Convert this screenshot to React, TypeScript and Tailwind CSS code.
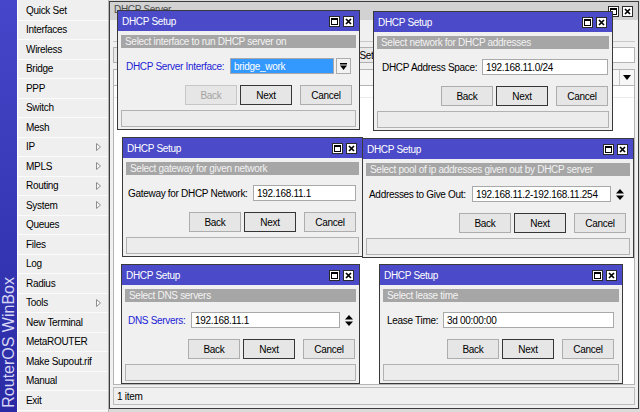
import React from 'react';

type MenuItem = { label: string; sub?: boolean };

const menuItems: MenuItem[] = [
  { label: 'Quick Set' },
  { label: 'Interfaces' },
  { label: 'Wireless' },
  { label: 'Bridge' },
  { label: 'PPP' },
  { label: 'Switch' },
  { label: 'Mesh' },
  { label: 'IP', sub: true },
  { label: 'MPLS', sub: true },
  { label: 'Routing', sub: true },
  { label: 'System', sub: true },
  { label: 'Queues' },
  { label: 'Files' },
  { label: 'Log' },
  { label: 'Radius' },
  { label: 'Tools', sub: true },
  { label: 'New Terminal' },
  { label: 'MetaROUTER' },
  { label: 'Make Supout.rif' },
  { label: 'Manual' },
  { label: 'Exit' },
];

type Dialog = {
  pos: string;
  subtitle: string;
  label: string;
  labelCls: string;
  rowCls: string;
  btnCls: string;
  value: string;
  selected?: boolean;
  tail?: 'drop' | 'spin';
  backOff?: boolean;
};

// order matters: later ones sit on top
const dialogs: Dialog[] = [
  {
    pos: 'left-[117px] top-[10px] w-[243px]',
    subtitle: 'Select interface to run DHCP server on',
    label: 'DHCP Server Interface:',
    labelCls: 'w-[104px] text-[#1c1cd6]',
    rowCls: 'pl-[5px] pr-[5px]',
    btnCls: 'pr-[4px]',
    value: 'bridge_work',
    selected: true,
    tail: 'drop',
    backOff: true,
  },
  {
    pos: 'left-[373px] top-[11px] w-[240px]',
    subtitle: 'Select network for DHCP addresses',
    label: 'DHCP Address Space:',
    labelCls: 'w-[100px] text-black',
    rowCls: 'pl-[5px] pr-[1px]',
    btnCls: 'pr-[1px]',
    value: '192.168.11.0/24',
  },
  {
    pos: 'left-[122px] top-[137px] w-[241px]',
    subtitle: 'Select gateway for given network',
    label: 'Gateway for DHCP Network:',
    labelCls: 'w-[125px] text-black',
    rowCls: 'pl-[2px] pr-[3px]',
    btnCls: 'pr-[3px]',
    value: '192.168.11.1',
  },
  {
    pos: 'left-[362px] top-[138px] w-[272px]',
    subtitle: 'Select pool of ip addresses given out by DHCP server',
    label: 'Addresses to Give Out:',
    labelCls: 'w-[103px] text-black',
    rowCls: 'pl-[3px] pr-[6px]',
    btnCls: 'pr-[4px]',
    value: '192.168.11.2-192.168.11.254',
    tail: 'spin',
  },
  {
    pos: 'left-[121px] top-[264px] w-[239px]',
    subtitle: 'Select DNS servers',
    label: 'DNS Servers:',
    labelCls: 'w-[63px] text-[#1c1cd6]',
    rowCls: 'pl-[3px] pr-[3px]',
    btnCls: 'pr-[1px]',
    value: '192.168.11.1',
    tail: 'spin',
  },
  {
    pos: 'left-[379px] top-[264px] w-[244px]',
    subtitle: 'Select lease time',
    label: 'Lease Time:',
    labelCls: 'w-[56px] text-black',
    rowCls: 'pl-[4px] pr-[5px]',
    btnCls: 'pr-[5px]',
    value: '3d 00:00:00',
  },
];

function WinButtons() {
  return (
    <div className="flex items-center gap-[3px]">
      <div className="w-[11px] h-[11px] bg-white border border-[#2a2a2a] flex items-center justify-center">
        <svg width="7" height="7" viewBox="0 0 7 7">
          <rect x="0.5" y="0.5" width="6" height="6" fill="none" stroke="#000" />
          <rect x="0" y="0" width="7" height="2" fill="#000" />
        </svg>
      </div>
      <div className="w-[11px] h-[11px] bg-white border border-[#2a2a2a] flex items-center justify-center">
        <svg width="7" height="7" viewBox="0 0 7 7">
          <path d="M1 1L6 6M6 1L1 6" stroke="#000" strokeWidth="1.7" />
        </svg>
      </div>
    </div>
  );
}

function SubArrow() {
  return (
    <svg width="5" height="8" viewBox="0 0 5 8">
      <path d="M0.5 0.5L4.5 4L0.5 7.5Z" fill="#f6f6f6" stroke="#8e8e8e" strokeWidth="1" />
    </svg>
  );
}

function SetupDialog({ d }: { d: Dialog }) {
  return (
    <div className={`absolute ${d.pos} h-[120px] border border-[#3a3a3a] bg-[#f0f0f0] flex flex-col`}>
      {/* Title */}
      <div className="h-[20px] bg-[#4b4bc9] flex items-center justify-between pl-[4px] pr-[5px] text-white">
        <span>DHCP Setup</span>
        <WinButtons />
      </div>

      <div className="flex-1 flex flex-col px-[3px]">
        <div className="mt-[4px] h-[13px] bg-[#a6a6a6] text-[#f3f3f3] pl-[4px] leading-[13px] whitespace-nowrap overflow-hidden">
          {d.subtitle}
        </div>

        {/* Field row */}
        <div className={`mt-[10px] h-[16px] flex items-center ${d.rowCls}`}>
          <span className={`shrink-0 whitespace-nowrap ${d.labelCls}`}>{d.label}</span>
          <div
            className={`flex-1 h-[16px] border border-[#a9a9a9] flex items-center pl-[3px] whitespace-nowrap overflow-hidden ${
              d.selected ? 'bg-[#3399ff] text-white' : 'bg-white text-black'
            }`}
          >
            {d.value}
          </div>
          {d.tail === 'drop' && (
            <div className="ml-[2px] w-[15px] h-[16px] border border-[#acacac] bg-[#f2f2f2] flex items-center justify-center">
              <svg width="7" height="7" viewBox="0 0 7 7">
                <rect x="0" y="0" width="7" height="1.5" fill="#000" />
                <path d="M0 2.5H7L3.5 7Z" fill="#000" />
              </svg>
            </div>
          )}
          {d.tail === 'spin' && (
            <div className="ml-[5px] w-[8px] flex items-center justify-center">
              <svg width="8" height="11" viewBox="0 0 8 11">
                <path d="M0 4.5H8L4 0Z" fill="#000" />
                <path d="M0 6.5H8L4 11Z" fill="#000" />
              </svg>
            </div>
          )}
        </div>

        {/* Buttons */}
        <div className={`mt-[11px] h-[20px] flex justify-end ${d.btnCls}`}>
          <div
            className={`w-[52px] h-[20px] border bg-[#e6e6e6] flex items-center justify-center ${
              d.backOff ? 'border-[#c6c6c6] text-[#a3a3a3]' : 'border-[#adadad] text-black'
            }`}
          >
            Back
          </div>
          <div className="ml-[3px] w-[52px] h-[20px] border border-[#363636] bg-[#e6e6e6] flex items-center justify-center">
            Next
          </div>
          <div className="ml-[8px] w-[52px] h-[20px] border border-[#adadad] bg-[#e6e6e6] flex items-center justify-center">
            Cancel
          </div>
        </div>

        {/* Status */}
        <div className="mt-[5px] h-[17px] border border-[#b2b2b2] bg-[#ececec]" />
      </div>
    </div>
  );
}

// header cells of the list behind the wizard (labels are hidden under the dialogs)
const columnWidths = ['w-[80px]', 'w-[90px]', 'w-[92px]', 'w-[70px]', 'w-[90px]', 'w-[70px]'];

export default function App() {
  return (
    <div className="relative w-[640px] h-[412px] overflow-hidden bg-[#dadada] flex font-['Liberation_Sans',Arial,sans-serif] text-[10px] tracking-[-0.3px] text-black">
      {/* Brand strip */}
      <div className="w-[17px] h-full bg-linear-to-b from-[#4646ca] to-[#2a2aa4] flex flex-col justify-end items-center pb-[4px]">
        <span className="[writing-mode:vertical-rl] rotate-180 text-[16px] tracking-normal leading-[17px] text-[#d6d6f4] whitespace-nowrap">
          RouterOS WinBox
        </span>
      </div>

      {/* Menu */}
      <div className="w-[92px] h-full bg-[#efefef] border-l border-white border-r border-r-[#b4b4b4] pt-[1px] flex flex-col">
        {menuItems.map((m) => (
          <div
            key={m.label}
            className="h-[19.5px] shrink-0 border-b border-[#fbfbfb] flex items-center justify-between pl-[8px] pr-[7px] whitespace-nowrap"
          >
            <span>{m.label}</span>
            {m.sub && <SubArrow />}
          </div>
        ))}
      </div>

      {/* Main DHCP Server window */}
      <div className="mt-[1px] w-[530px] h-[408px] border border-[#3c3c3c] bg-[#f0f0f0] flex flex-col">
        <div className="h-[18px] bg-[#d2d2d2] flex items-center justify-between pl-[4px] pr-[5px] text-[#4a4a4a]">
          <span className="-mt-[4px]">DHCP Server</span>
          <WinButtons />
        </div>

        <div className="flex-1 flex flex-col px-[3px] pb-[3px]">
          {/* tab strip */}
          <div className="mt-[2px] h-[20px] border-b border-[#c8c8c8]" />

          {/* toolbar */}
          <div className="mt-[5px] h-[16px] flex items-center gap-[3px]">
            {[0, 1, 2, 3, 4, 5].map((i) => (
              <div key={i} className="w-[22px] h-[16px] border border-[#b0b0b0] bg-[#e9e9e9]" />
            ))}
            <div className="w-[60px] h-[16px] border border-[#b0b0b0] bg-[#e9e9e9]" />
            <div className="w-[62px] h-[16px] border border-[#b0b0b0] bg-[#e9e9e9] flex items-center justify-center">
              DHCP Setup
            </div>
            <div className="flex-1" />
            <div className="w-[96px] h-[16px] border border-[#b4b4b4] bg-white" />
          </div>

          {/* column header */}
          <div className="mt-[6px] h-[17px] flex border border-[#b4b4b4] bg-[#f7f7f7]">
            {columnWidths.map((w, i) => (
              <div key={i} className={`${w} shrink-0 border-r border-[#d0d0d0]`} />
            ))}
            <div className="flex-1" />
            <div className="w-[15px] border-l border-[#c4c4c4] flex items-center justify-center">
              <svg width="8" height="5" viewBox="0 0 8 5">
                <path d="M0 0H8L4 5Z" fill="#000" />
              </svg>
            </div>
          </div>

          {/* list */}
          <div className="flex-1 bg-white border-x border-b border-[#b4b4b4]">
            <div className="h-[12px] border-b border-[#ececec]" />
          </div>

          {/* status */}
          <div className="mt-[2px] h-[18px] border border-[#bcbcbc] bg-[#f0f0f0] flex items-center pl-[3px]">
            1 item
          </div>
        </div>
      </div>

      {dialogs.map((d) => (
        <SetupDialog key={d.subtitle} d={d} />
      ))}
    </div>
  );
}
